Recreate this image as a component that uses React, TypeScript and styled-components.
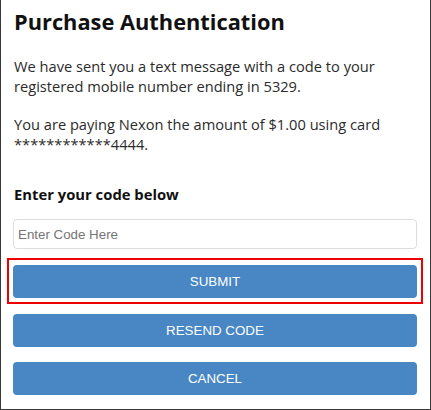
import React from 'react';
import styled, { createGlobalStyle } from 'styled-components';

const GlobalStyle = createGlobalStyle`
  html, body {
    margin: 0;
    padding: 0;
    background: #fff;
  }
  * {
    box-sizing: border-box;
  }
`;

const Frame = styled.div`
  width: 431px;
  height: 410px;
  border: 1px solid #3a3a3a;
  border-top: none;
  padding: 7px 13px 0 12px;
  font-family: 'Open Sans', 'Noto Sans', sans-serif;
  color: #2b2b2b;
  background: #fff;
`;

const Title = styled.h1`
  margin: 0 0 19px 1px;
  font-size: 21.8px;
  line-height: 30px;
  font-weight: 700;
  color: #111;
`;

const Text = styled.p`
  margin: 0 0 18px 1px;
  font-size: 14.65px;
  line-height: 20px;
`;

const Label = styled.label`
  display: block;
  margin: 30px 0 15px 1px;
  font-size: 14.8px;
  line-height: 20px;
  font-weight: 700;
  color: #111;
`;

const CodeInput = styled.input`
  display: block;
  width: 100%;
  height: 30px;
  margin: 0 0 9px;
  padding: 0 4px;
  border: 1px solid #ddd;
  border-radius: 4px;
  font-family: 'Liberation Sans', Arial, sans-serif;
  font-size: 13.33px;
  color: #333;
  outline: none;

  &::placeholder {
    color: #757575;
  }
`;

const Highlight = styled.div`
  margin: 0 -6px 10px -6px;
  padding: 5px 4px 4px 4px;
  border: 2px solid #e00;
`;

const Stack = styled.div`
  display: flex;
  flex-direction: column;
  gap: 15px;
`;

const Button = styled.button`
  display: block;
  width: 100%;
  height: 33px;
  padding: 0;
  border: none;
  border-radius: 4px;
  background: #4886c4;
  color: #fff;
  font-family: 'Liberation Sans', Arial, sans-serif;
  font-size: 13.33px;
  text-transform: uppercase;
  cursor: pointer;
`;

const App = () => {
  return (
    <>
      <GlobalStyle />
      <Frame>
        <Title>Purchase Authentication</Title>
        <Text>
          We have sent you a text message with a code to your registered mobile number ending in 5329.
        </Text>
        <Text>
          You are paying Nexon the amount of $1.00 using card ************4444.
        </Text>
        <Label htmlFor="code">Enter your code below</Label>
        <CodeInput id="code" placeholder="Enter Code Here" autoFocus />
        <Highlight>
          <Button>Submit</Button>
        </Highlight>
        <Stack>
          <Button>Resend Code</Button>
          <Button>Cancel</Button>
        </Stack>
      </Frame>
    </>
  );
};

export default App;
